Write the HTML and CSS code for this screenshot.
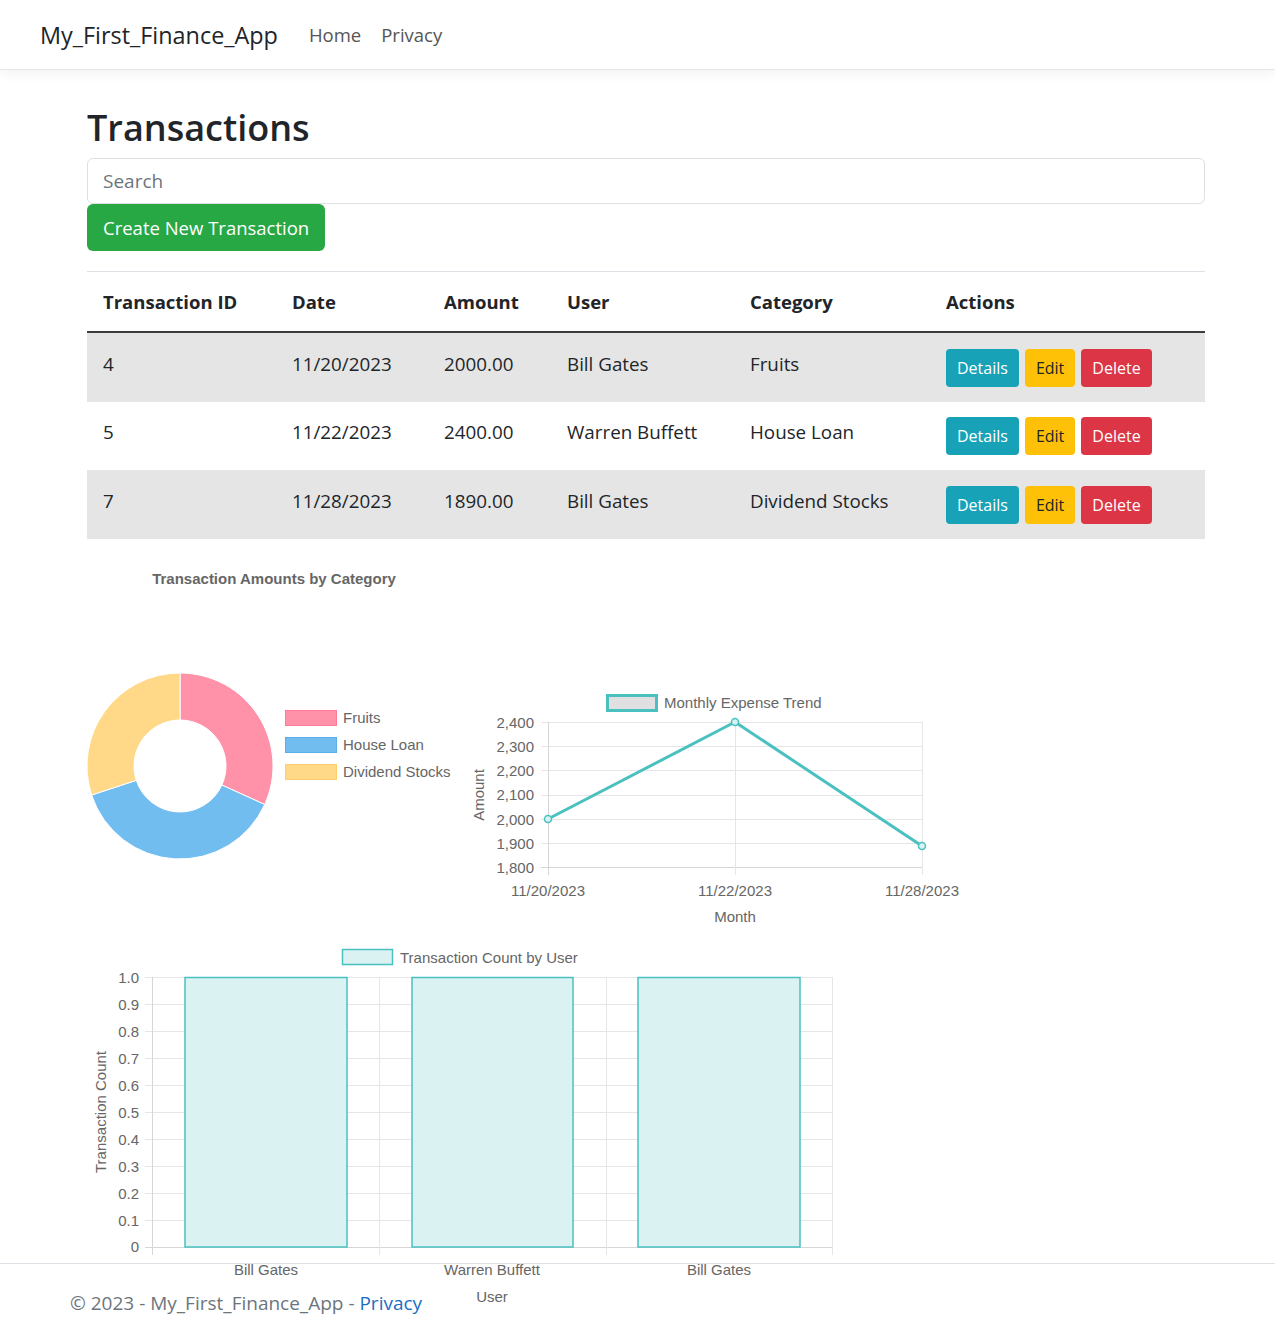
FILE: index.html
```html
<!DOCTYPE html>
<html lang="en">
<head>
<meta charset="utf-8">
<title>Index - My_First_Finance_App</title>
<link rel="stylesheet" href="styles.css">
</head>
<body>
<header class="navbar">
  <a class="brand" href="#">My_First_Finance_App</a>
  <nav class="nav">
    <a class="nav-link" href="#">Home</a>
    <a class="nav-link" href="#">Privacy</a>
  </nav>
</header>

<main class="container">
  <h1 class="title">Transactions</h1>
  <input class="search" type="text" placeholder="Search">
  <a class="btn btn-create" href="#">Create New Transaction</a>

  <table class="table">
    <colgroup>
      <col class="c1"><col class="c2"><col class="c3"><col class="c4"><col class="c5"><col class="c6">
    </colgroup>
    <thead>
      <tr>
        <th>Transaction ID</th>
        <th>Date</th>
        <th>Amount</th>
        <th>User</th>
        <th>Category</th>
        <th>Actions</th>
      </tr>
    </thead>
    <tbody>
      <tr class="striped">
        <td>4</td><td>11/20/2023</td><td>2000.00</td><td>Bill Gates</td><td>Fruits</td>
        <td><div class="actions"><a class="btn btn-info" href="#">Details</a><a class="btn btn-warning" href="#">Edit</a><a class="btn btn-danger" href="#">Delete</a></div></td>
      </tr>
      <tr>
        <td>5</td><td>11/22/2023</td><td>2400.00</td><td>Warren Buffett</td><td>House Loan</td>
        <td><div class="actions"><a class="btn btn-info" href="#">Details</a><a class="btn btn-warning" href="#">Edit</a><a class="btn btn-danger" href="#">Delete</a></div></td>
      </tr>
      <tr class="striped">
        <td>7</td><td>11/28/2023</td><td>1890.00</td><td>Bill Gates</td><td>Dividend Stocks</td>
        <td><div class="actions"><a class="btn btn-info" href="#">Details</a><a class="btn btn-warning" href="#">Edit</a><a class="btn btn-danger" href="#">Delete</a></div></td>
      </tr>
    </tbody>
  </table>

  <section class="charts">
    <div class="chart-row">
      <svg class="chart chart-doughnut" width="380" height="384" viewBox="0 0 380 384">
        <text class="chart-title" x="187" y="23">Transaction Amounts by Category</text>
        <path class="seg-pink" d="M93,118 A93,93 0 0 1 177.66,249.5 L134.87,230.04 A46,46 0 0 0 93,165 Z"/>
        <path class="seg-blue" d="M177.66,249.5 A93,93 0 0 1 4.64,240.01 L49.3,225.35 A46,46 0 0 0 134.87,230.04 Z"/>
        <path class="seg-yellow" d="M4.64,240.01 A93,93 0 0 1 93,118 L93,165 A46,46 0 0 0 49.3,225.35 Z"/>
        <rect class="lg-pink" x="198.5" y="155.5" width="51" height="15"/>
        <text x="256" y="162">Fruits</text>
        <rect class="lg-blue" x="198.5" y="182.5" width="51" height="15"/>
        <text x="256" y="189">House Loan</text>
        <rect class="lg-yellow" x="198.5" y="209.5" width="51" height="15"/>
        <text x="256" y="216">Dividend Stocks</text>
      </svg>

      <svg class="chart chart-line" width="510" height="384" viewBox="0 0 510 384">
        <rect class="lg-line" x="140.5" y="140.5" width="49" height="15"/>
        <text x="197" y="147">Monthly Expense Trend</text>
        <g class="grid">
          <line x1="74" y1="167" x2="455" y2="167"/>
          <line x1="74" y1="191" x2="455" y2="191"/>
          <line x1="74" y1="215" x2="455" y2="215"/>
          <line x1="74" y1="240" x2="455" y2="240"/>
          <line x1="74" y1="264" x2="455" y2="264"/>
          <line x1="74" y1="288" x2="455" y2="288"/>
          <line class="axis" x1="74" y1="312" x2="455" y2="312"/>
          <line class="axis" x1="81" y1="167" x2="81" y2="320"/>
          <line x1="268" y1="167" x2="268" y2="320"/>
          <line x1="455" y1="167" x2="455" y2="320"/>
        </g>
        <g class="ylabels">
          <text x="67" y="167">2,400</text>
          <text x="67" y="191">2,300</text>
          <text x="67" y="215">2,200</text>
          <text x="67" y="239">2,100</text>
          <text x="67" y="264">2,000</text>
          <text x="67" y="288">1,900</text>
          <text x="67" y="312">1,800</text>
        </g>
        <polyline class="trend" points="81,264 268,167 455,291"/>
        <circle class="pt" cx="81" cy="264" r="3.5"/>
        <circle class="pt" cx="268" cy="167" r="3.5"/>
        <circle class="pt" cx="455" cy="291" r="3.5"/>
        <g class="xlabels">
          <text x="81" y="335">11/20/2023</text>
          <text x="268" y="335">11/22/2023</text>
          <text x="455" y="335">11/28/2023</text>
          <text x="268" y="361">Month</text>
        </g>
        <text class="rot" transform="translate(11 240) rotate(-90)">Amount</text>
      </svg>
    </div>

    <svg class="chart chart-bar" width="760" height="370" viewBox="0 0 760 370">
      <rect class="lg-bar" x="255.5" y="10.5" width="50" height="15"/>
      <text x="313" y="18">Transaction Count by User</text>
      <g class="grid">
        <line x1="58" y1="38" x2="745" y2="38"/>
        <line x1="58" y1="65" x2="745" y2="65"/>
        <line x1="58" y1="92" x2="745" y2="92"/>
        <line x1="58" y1="119" x2="745" y2="119"/>
        <line x1="58" y1="146" x2="745" y2="146"/>
        <line x1="58" y1="173" x2="745" y2="173"/>
        <line x1="58" y1="200" x2="745" y2="200"/>
        <line x1="58" y1="227" x2="745" y2="227"/>
        <line x1="58" y1="254" x2="745" y2="254"/>
        <line x1="58" y1="281" x2="745" y2="281"/>
        <line class="axis" x1="58" y1="308" x2="745" y2="308"/>
        <line class="axis" x1="65" y1="38" x2="65" y2="316"/>
        <line x1="292" y1="38" x2="292" y2="316"/>
        <line x1="519" y1="38" x2="519" y2="316"/>
        <line x1="745" y1="38" x2="745" y2="316"/>
      </g>
      <rect class="bar" x="98" y="38.5" width="162" height="269.5"/>
      <rect class="bar" x="325" y="38.5" width="161" height="269.5"/>
      <rect class="bar" x="551" y="38.5" width="162" height="269.5"/>
      <g class="ylabels">
        <text x="52" y="38">1.0</text>
        <text x="52" y="65">0.9</text>
        <text x="52" y="92">0.8</text>
        <text x="52" y="119">0.7</text>
        <text x="52" y="146">0.6</text>
        <text x="52" y="173">0.5</text>
        <text x="52" y="200">0.4</text>
        <text x="52" y="227">0.3</text>
        <text x="52" y="254">0.2</text>
        <text x="52" y="281">0.1</text>
        <text x="52" y="307">0</text>
      </g>
      <g class="xlabels">
        <text x="179" y="330">Bill Gates</text>
        <text x="405" y="330">Warren Buffett</text>
        <text x="632" y="330">Bill Gates</text>
        <text x="405" y="357">User</text>
      </g>
      <text class="rot" transform="translate(13 173) rotate(-90)">Transaction Count</text>
    </svg>
  </section>
</main>

<footer class="footer">
  <div class="footer-inner">&copy; 2023 - My_First_Finance_App - <a class="footer-link" href="#">Privacy</a></div>
</footer>
</body>
</html>
```

FILE: styles.css
```css
html {
  position: relative;
  min-height: 100%;
}

body {
  margin: 0;
  font-family: "Open Sans", "Noto Sans", sans-serif;
  font-size: 19px;
  color: #212529;
  background: #fff;
}

a {
  text-decoration: none;
}

/* Navbar */
.navbar {
  display: flex;
  align-items: center;
  height: 69px;
  padding-left: 40px;
  border-bottom: 1px solid #e5e5e5;
  box-shadow: 0 4px 12px rgba(0, 0, 0, 0.05);
  background: #fff;
}

.brand {
  font-size: 23.4px;
  color: #212529;
  margin-right: 21px;
  line-height: 32px;
}

.nav {
  display: flex;
}

.nav-link {
  padding: 0 10px;
  font-size: 18.5px;
  color: #555;
  line-height: 32px;
}

/* Main */
.container {
  width: 1118px;
  margin-left: 87px;
}

.title {
  margin: 36px 0 8px;
  font-size: 36px;
  font-weight: 600;
  line-height: 44px;
  color: #212529;
}

.search {
  display: block;
  box-sizing: border-box;
  width: 100%;
  height: 46px;
  margin: 0;
  padding: 0 15px;
  border: 1px solid #dcdfe3;
  border-radius: 6px;
  font-family: inherit;
  font-size: 19px;
  color: #212529;
  background: #fff;
}

.search::placeholder {
  color: #6c757d;
}

.btn {
  display: inline-block;
  box-sizing: border-box;
  height: 38px;
  padding: 0 11px;
  border-radius: 4px;
  font-size: 16px;
  line-height: 38px;
  color: #fff;
  white-space: nowrap;
}

.btn-create {
  display: block;
  width: max-content;
  height: 47px;
  padding: 0 16px;
  line-height: 47px;
  font-size: 18.5px;
  border-radius: 6px;
  background: #28a745;
}

.btn-info {
  background: #17a2b8;
}

.btn-warning {
  background: #ffc107;
  color: #212529;
}

.btn-danger {
  background: #dc3545;
}

/* Table */
.table {
  width: 100%;
  margin-top: 20px;
  border-collapse: collapse;
  table-layout: fixed;
}

.c1 { width: 189px; }
.c2 { width: 152px; }
.c3 { width: 123px; }
.c4 { width: 183px; }
.c5 { width: 196px; }
.c6 { width: 275px; }

.table th {
  padding: 16px 16px 15px;
  font-size: 18.5px;
  font-weight: 700;
  line-height: 28px;
  text-align: left;
  border-top: 1px solid #dee2e6;
  border-bottom: 2px solid #3c3c3c;
}

.table td {
  padding: 15.5px 16px 15px;
  font-size: 18.8px;
  line-height: 30px;
  vertical-align: top;
  white-space: nowrap;
}

.table tr.striped td {
  background: #e5e5e5;
}

.actions {
  display: flex;
  gap: 6px;
}

/* Charts */
.charts {
  margin-top: 16px;
}

.chart-row {
  display: flex;
}

.chart {
  display: block;
}

.chart text {
  font-family: "Liberation Sans", Arial, sans-serif;
  font-size: 15px;
  fill: #666;
  dominant-baseline: central;
}

.chart .chart-title {
  font-weight: 700;
  text-anchor: middle;
}

.seg-pink { fill: #ff91a8; stroke: #fff; stroke-width: 1; }
.seg-blue { fill: #72bdf0; stroke: #fff; stroke-width: 1; }
.seg-yellow { fill: #ffd988; stroke: #fff; stroke-width: 1; }

.lg-pink { fill: #ff91a8; stroke: #ff7a96; stroke-width: 1; }
.lg-blue { fill: #72bdf0; stroke: #5aafea; stroke-width: 1; }
.lg-yellow { fill: #ffd988; stroke: #ffd06a; stroke-width: 1; }

.lg-line {
  fill: #e0e0e0;
  stroke: #4bc0c0;
  stroke-width: 3;
}

.lg-bar {
  fill: #dbf2f2;
  stroke: #4bc0c0;
  stroke-width: 1.5;
}

.grid line {
  stroke: #e6e6e6;
  stroke-width: 1;
  shape-rendering: crispEdges;
}

.grid line.axis {
  stroke: #d6d6d6;
}

.ylabels text {
  text-anchor: end;
}

.xlabels text {
  text-anchor: middle;
}

.chart .rot {
  text-anchor: middle;
}

.trend {
  fill: none;
  stroke: #4bc0c0;
  stroke-width: 3;
  stroke-linejoin: round;
}

.pt {
  fill: #dbf2f2;
  stroke: #4bc0c0;
  stroke-width: 1.5;
}

.bar {
  fill: #dbf2f2;
  stroke: #4bc0c0;
  stroke-width: 1.5;
}

/* Footer */
.footer {
  position: absolute;
  left: 0;
  right: 0;
  bottom: 0;
  height: 74px;
  border-top: 1px solid #dee2e6;
  white-space: nowrap;
}

.footer-inner {
  padding-left: 70px;
  font-size: 19px;
  line-height: 78px;
  color: #6c757d;
}

.footer-link {
  color: #1b6ec2;
}
```
